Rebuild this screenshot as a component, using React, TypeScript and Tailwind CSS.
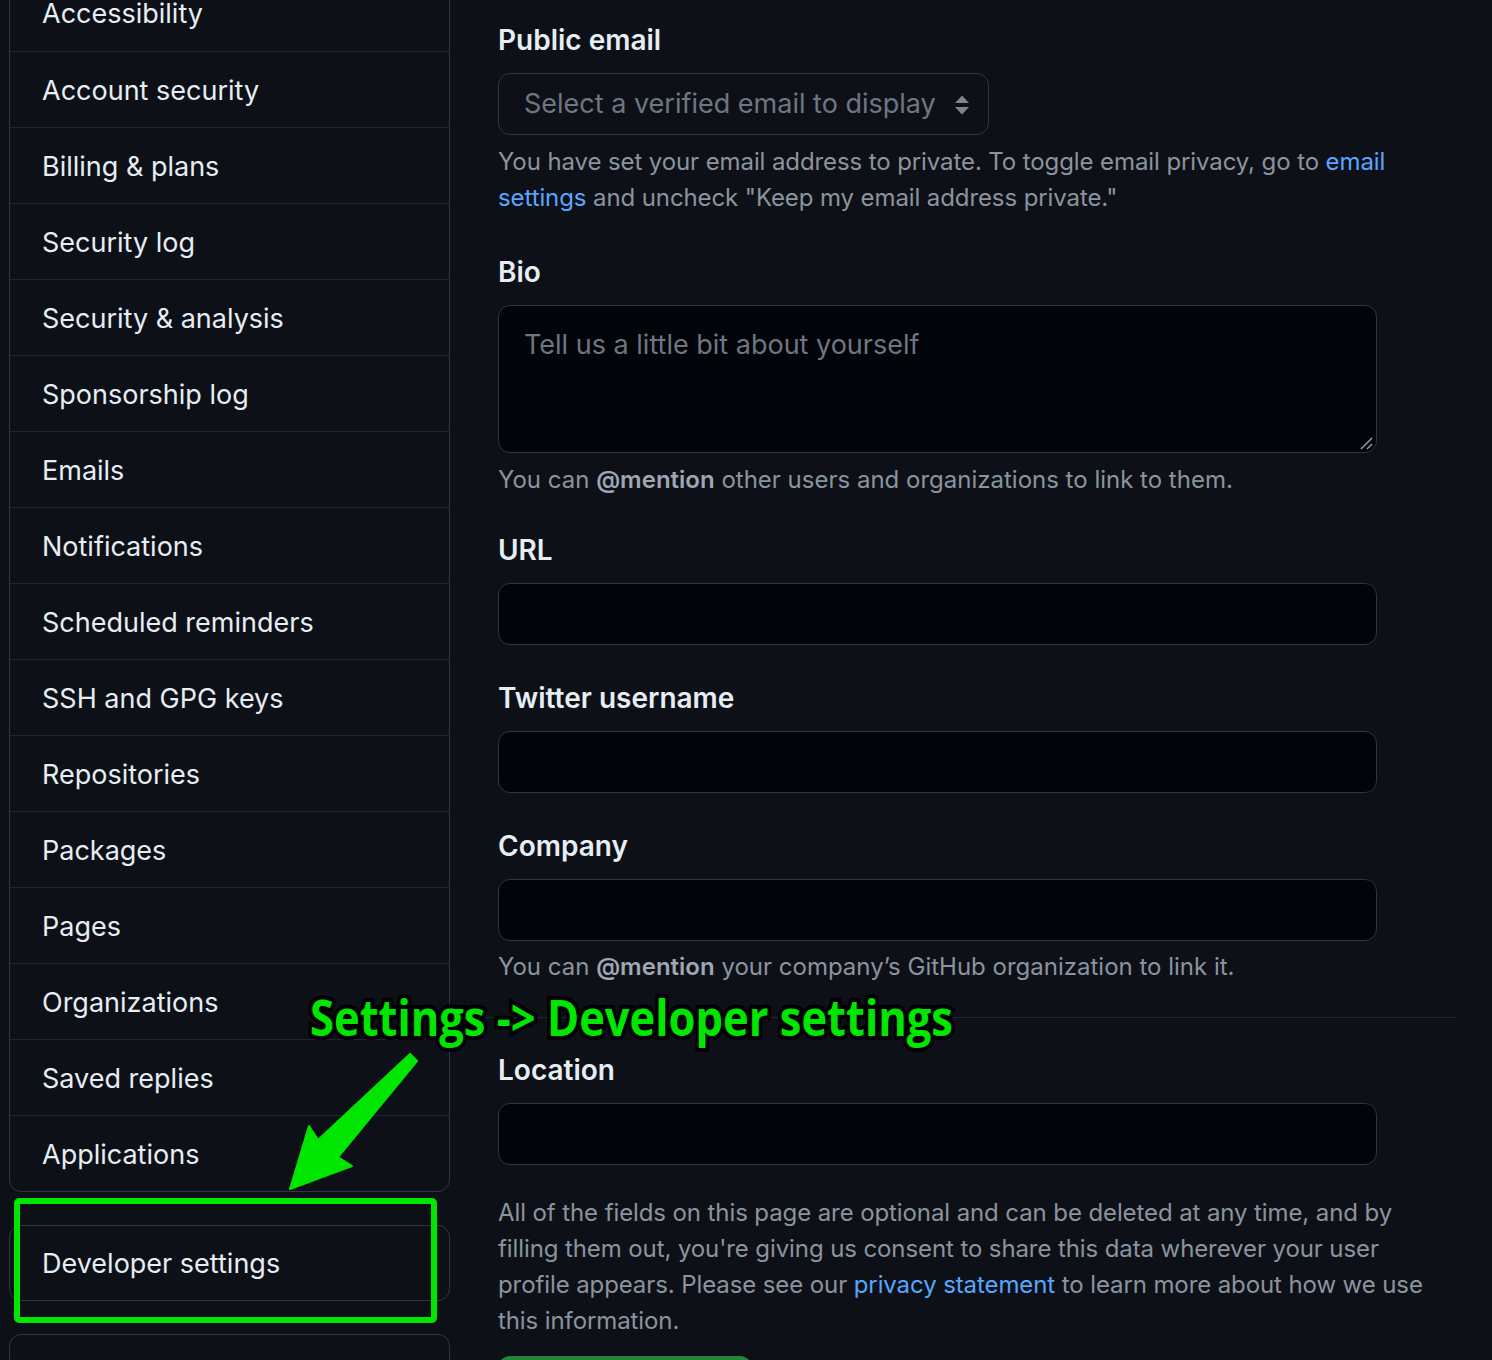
import React from "react";

const items = [
  "Accessibility",
  "Account security",
  "Billing & plans",
  "Security log",
  "Security & analysis",
  "Sponsorship log",
  "Emails",
  "Notifications",
  "Scheduled reminders",
  "SSH and GPG keys",
  "Repositories",
  "Packages",
  "Pages",
  "Organizations",
  "Saved replies",
  "Applications",
];

function Label({ children, className = "" }: { children: React.ReactNode; className?: string }) {
  return (
    <div className={"h-[42px] leading-[42px] text-[28px] font-semibold text-[#e6edf3] mb-[12px] " + className}>
      {children}
    </div>
  );
}

function TextInput({ className = "" }: { className?: string }) {
  return (
    <input
      type="text"
      className={"block w-[879px] h-[62px] rounded-[12px] border border-[#30363d] bg-[#010409] outline-none px-[24px] text-[28px] text-[#e6edf3] " + className}
    />
  );
}

export default function App() {
  return (
    <div
      className="relative w-[1492px] h-[1360px] overflow-hidden bg-[#0d1117] flex items-start"
      style={{ fontFamily: "Inter, 'Noto Sans', 'Liberation Sans', sans-serif" }}
    >
      {/* Sidebar */}
      <div className="ml-[9px] w-[441px] shrink-0 -mt-[26px] flex flex-col">
        <div className="shrink-0 border border-[#30363d] rounded-[12px] overflow-hidden">
          {items.map((it, i) => (
            <div
              key={it}
              className={
                "h-[76px] shrink-0 flex items-center px-[32px] pt-[3px] text-[27px] text-[#e6edf3] " +
                (i > 0 ? "border-t border-[#21262d]" : "")
              }
            >
              {it}
            </div>
          ))}
        </div>
        <div className="shrink-0 mt-[33px] border border-[#30363d] rounded-[12px] h-[76px] flex items-center px-[32px] pt-[3px] text-[27px] text-[#e6edf3]">
          Developer settings
        </div>
        <div className="shrink-0 mt-[33px] border border-[#30363d] rounded-[12px] h-[200px]" />
      </div>

      {/* Main */}
      <div className="ml-[48px] w-[958px] shrink-0 pt-[19px]">
        <Label>Public email</Label>
        <div className="relative w-[491px] h-[62px] rounded-[12px] border border-[#30363d] flex items-center pl-[25px] text-[27px] text-[#6e7681]">
          Select a verified email to display
          <svg className="absolute right-[18px] top-[21px]" width="16" height="20" viewBox="0 0 16 20">
            <path d="M1 8 L8 0.5 L15 8 Z" fill="#7d8590" />
            <path d="M1 12 L8 19.5 L15 12 Z" fill="#7d8590" />
          </svg>
        </div>
        <p className="mt-[9px] text-[24px] leading-[36px] text-[#8b949e] tracking-[-0.1px]">
          You have set your email address to private. To toggle email privacy, go to{" "}
          <span className="text-[#58a6ff]">email</span>
          <br />
          <span className="text-[#58a6ff]">settings</span> and uncheck "Keep my email address private."
        </p>

        <Label className="mt-[35px]">Bio</Label>
        <div className="relative w-[879px] h-[148px]">
          <textarea
            placeholder="Tell us a little bit about yourself"
            className="block w-full h-full resize-none rounded-[12px] border border-[#30363d] bg-[#010409] outline-none px-[25px] py-[20px] text-[27px] leading-[38px] text-[#e6edf3] placeholder:text-[#6e7681]"
          />
          <svg className="absolute right-[4px] bottom-[3px]" width="14" height="14" viewBox="0 0 14 14">
            <path d="M2 13 L13 2" stroke="#9198a1" strokeWidth="1.6" />
            <path d="M8 13 L13 8" stroke="#9198a1" strokeWidth="1.6" />
          </svg>
        </div>
        <p className="mt-[9px] text-[24px] leading-[36px] text-[#8b949e]">
          You can <span className="font-semibold text-[#9ea7b3]">@mention</span> other users and organizations to link to them.
        </p>

        <Label className="mt-[31px]">URL</Label>
        <TextInput />

        <Label className="mt-[32px]">Twitter username</Label>
        <TextInput />

        <Label className="mt-[32px]">Company</Label>
        <TextInput />
        <p className="mt-[8px] text-[24px] leading-[36px] text-[#8b949e]">
          You can <span className="font-semibold text-[#9ea7b3]">@mention</span> your company’s GitHub organization to link it.
        </p>

        <div className="mt-[32px] -ml-[48px] h-px bg-[#21262d]" />

        <Label className="mt-[31px]">Location</Label>
        <TextInput />

        <p className="mt-[30px] text-[24px] leading-[36px] text-[#8b949e] tracking-[-0.1px]">
          All of the fields on this page are optional and can be deleted at any time, and by
          <br />
          filling them out, you're giving us consent to share this data wherever your user
          <br />
          profile appears. Please see our <span className="text-[#58a6ff]">privacy statement</span> to learn more about how we use
          <br />
          this information.
        </p>
        <div className="mt-[17px] w-[254px] h-[64px] rounded-[12px] bg-[#238636]" />
      </div>

      {/* Annotation overlay */}
      <div
        className="absolute left-[310px] top-[987px] whitespace-nowrap text-[50px] leading-[60px] font-bold text-[#00e600] origin-left scale-x-[0.87] [-webkit-text-stroke:8px_#000] [paint-order:stroke_fill]"
        style={{ fontFamily: "'Open Sans', 'Noto Sans', sans-serif" }}
      >
        Settings -&gt; Developer settings
      </div>
      <svg className="absolute left-0 top-0 pointer-events-none" width="1492" height="1360" viewBox="0 0 1492 1360">
        <polygon
          points="290,1189 352,1166 338,1157 417,1061 410,1054 318,1140 309,1126"
          fill="#00e600"
          stroke="#00e600"
          strokeWidth="2"
          strokeLinejoin="round"
        />
        <rect x="17" y="1201" width="417" height="119" rx="2" fill="none" stroke="#00e600" strokeWidth="6" />
      </svg>
    </div>
  );
}
